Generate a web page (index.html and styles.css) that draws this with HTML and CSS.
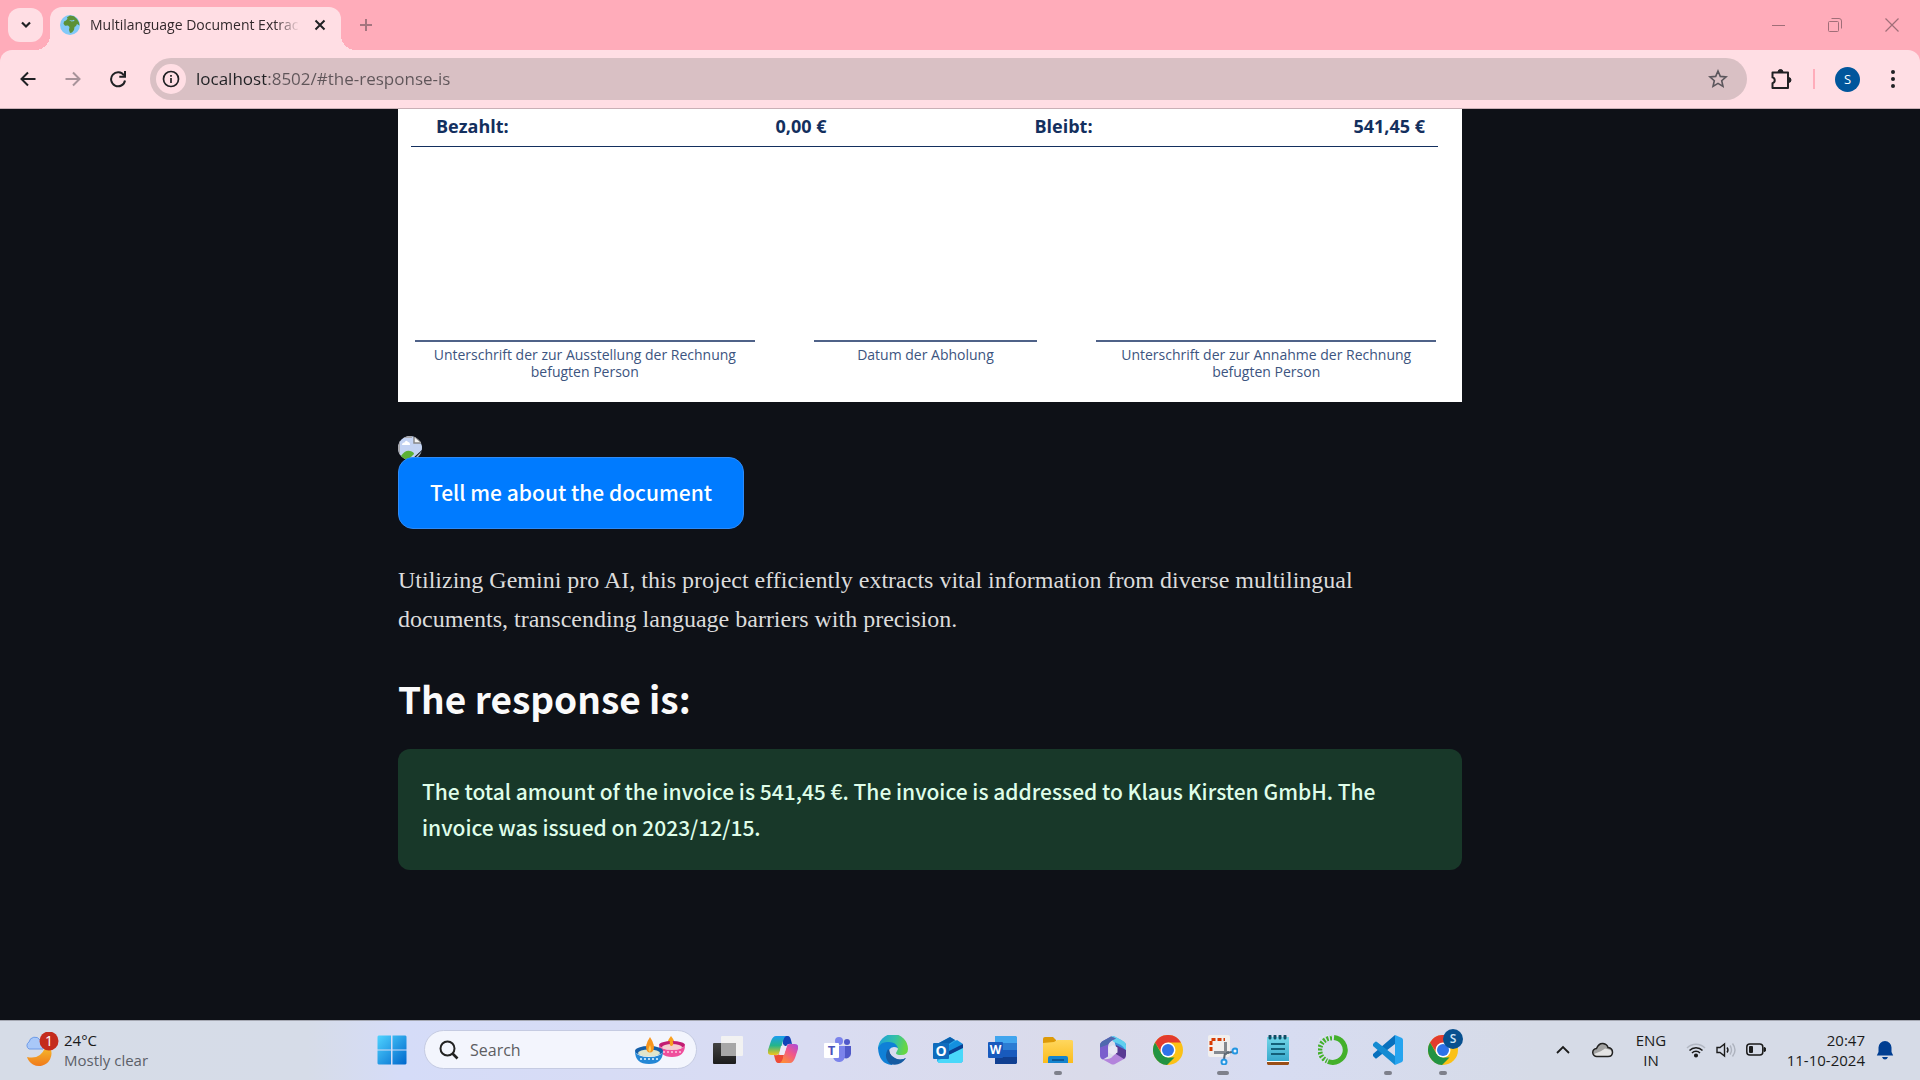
FILE: index.html
```html
<!DOCTYPE html>
<html lang="en">
<head>
<meta charset="utf-8">
<meta name="viewport" content="width=device-width, initial-scale=1">
<title>Multilanguage Document Extraction</title>
<link rel="stylesheet" href="styles.css">
</head>
<body>
<div class="desktop">

<header class="browser">
  <div class="tab-strip">
    <button class="tab-search" aria-label="Search tabs"><svg width="12" height="12" viewBox="0 0 12 12"><path d="M2 3.500l4 4 4-4" fill="none" stroke="#202124" stroke-width="2.200"/></svg></button>
    <div class="tab">
      <svg width="20" height="20" viewBox="0 0 20 20"><circle cx="10" cy="10" r="10" fill="#82c9f8"/><path d="M7 2.200l3-1.700 4 .8 3 2.700 2 3.500.5 3-2.500-1.500-1 2-1.500 1-.5 3-2 2.500-2 .5-1-3 .5-3-1.500-1.500-3 .2-1.500-2L4 6.500l2-1 1.500-1.800z" fill="#5c9137"/><path d="M9 5l3 .5 2-.8.5 1.300-3 .5z" fill="#82c9f8"/></svg>
      <span class="tab-title">Multilanguage Document Extrac</span>
      <button class="tab-close" aria-label="Close tab"><svg width="12" height="12" viewBox="0 0 12 12"><path d="M1.500 1.500l9 9M10.500 1.500l-9 9" stroke="#202124" stroke-width="2"/></svg></button>
    </div>
    <button class="new-tab" aria-label="New tab"><svg width="14" height="14" viewBox="0 0 14 14"><path d="M7 1v12M1 7h12" stroke="#a5757f" stroke-width="2"/></svg></button>
    <div class="window-controls">
      <button aria-label="Minimize"><svg width="14" height="14" viewBox="0 0 14 14"><path d="M1 7.500h13" stroke="#a06e78"/></svg></button>
      <button aria-label="Restore"><svg width="14" height="14" viewBox="0 0 14 14" fill="none" stroke="#a06e78"><rect x=".5" y="3.500" width="10" height="10" rx="1"/><path d="M3.500 .5h7.500a2.500 2.500 0 0 1 2.500 2.500v7.500"/></svg></button>
      <button aria-label="Close"><svg width="14" height="14" viewBox="0 0 14 14"><path d="M.5 .5l13 13M13.500 .5l-13 13" stroke="#a06e78" stroke-width="1.200"/></svg></button>
    </div>
  </div>

  <div class="toolbar">
    <button aria-label="Back"><svg width="18" height="18" viewBox="0 0 18 18" fill="none" stroke="#202124" stroke-width="2"><path d="M16.500 9H3M9 2.500L2.500 9 9 15.500"/></svg></button>
    <button aria-label="Forward"><svg width="18" height="18" viewBox="0 0 18 18" fill="none" stroke="#a8939a" stroke-width="2"><path d="M1.500 9H15M9 2.500L15.500 9 9 15.500"/></svg></button>
    <button aria-label="Reload"><svg width="18" height="18" viewBox="0 0 18 18" fill="none" stroke="#202124" stroke-width="2"><path d="M15 5.500A7 7 0 1 0 16 10.500"/><path d="M16 1v5.700h-5.700" /></svg></button>
    <div class="address">
      <button class="site-info" aria-label="View site information"><svg width="18" height="18" viewBox="0 0 18 18" fill="none" stroke="#202124"><circle cx="9" cy="9" r="7.500" stroke-width="1.700"/><path d="M9 8v5M9 5v1.800" stroke-width="1.700"/></svg></button>
      <input class="url" type="text" aria-label="Address and search bar" value="localhost:8502/#the-response-is">
      <button class="bookmark" aria-label="Bookmark this tab"><svg width="20" height="20" viewBox="0 0 20 20"><path d="M10 2l2.300 5.400 5.800.5-4.400 3.800 1.300 5.700-5-3-5 3 1.300-5.700L1.900 7.900l5.800-.5z" fill="none" stroke="#5b565c" stroke-width="1.600"/></svg></button>
    </div>
    <button aria-label="Extensions"><svg width="22" height="22" viewBox="0 0 22 22"><path d="M1.500 4.500h15.500v15.500H1.500v-4.800a3 3 0 0 0 0-5.800z" fill="none" stroke="#202124" stroke-width="2" stroke-linejoin="round"/><path d="M7 4a2.500 2.500 0 0 1 5 0zM17.500 9.500a2.500 2.500 0 0 1 0 5z" fill="#202124" stroke="#202124"/></svg></button>
    <span class="divider"></span>
    <button aria-label="Profile"><span class="avatar">S</span></button>
    <button aria-label="Menu"><svg width="6" height="20" viewBox="0 0 6 20" fill="#202124"><circle cx="3" cy="3" r="2"/><circle cx="3" cy="10" r="2"/><circle cx="3" cy="17" r="2"/></svg></button>
  </div>
</header>

<main class="page">
  <div class="content">
    <section class="invoice">
      <dl class="totals">
        <div><dt>Bezahlt:</dt><dd>0,00 €</dd></div>
        <div><dt>Bleibt:</dt><dd>541,45 €</dd></div>
      </dl>
      <div class="signatures">
        <p>Unterschrift der zur Ausstellung der Rechnung befugten Person</p>
        <p>Datum der Abholung</p>
        <p>Unterschrift der zur Annahme der Rechnung befugten Person</p>
      </div>
    </section>

    <svg class="missing-image" width="24" height="24" viewBox="0 0 24 24" role="img" aria-label="Image">
      <defs><clipPath id="mi"><circle cx="12" cy="12" r="12"/></clipPath></defs>
      <g clip-path="url(#mi)"><path d="M0 0h16l8 7v7L13 24H0z" fill="#c3d3f3"/><path d="M1 24V1h13" fill="none" stroke="#a9a9ad" stroke-width="2"/><path d="M4 9q0-2.500 2.500-2.500Q8 3.500 10 6q2 0 2 3z" fill="#fff"/><path d="M3 20q4-6 9-5 4 1 4 3l-6 6H2z" fill="#5cb135"/><path d="M16 0v7h8z" fill="#f5f5f5" stroke="#888" stroke-width="1.500"/><path d="M15 24l9-9v3l-6 6z" fill="#aebbc9"/></g>
    </svg>
    <button class="primary">Tell me about the document</button>
    <p class="intro">Utilizing Gemini pro AI, this project efficiently extracts vital information from diverse multilingual documents, transcending language barriers with precision.</p>
    <h2 class="response-title" id="the-response-is">The response is:</h2>
    <div class="alert" role="status">The total amount of the invoice is 541,45 €. The invoice is addressed to Klaus Kirsten GmbH. The invoice was issued on 2023/12/15.</div>
  </div>
</main>

<footer class="taskbar">
  <button class="weather">
    <svg width="36" height="36" viewBox="0 0 36 36">
      <defs><linearGradient id="moon" x2="0" y2="1"><stop stop-color="#f5b72b"/><stop offset="1" stop-color="#f07a1a"/></linearGradient></defs>
      <path d="M26 18a12.500 12.500 0 0 1-24 7q13 3 18-9z" fill="url(#moon)"/>
      <path d="M4 17a4 4 0 0 1 0-7 6 6 0 0 1 11-2 5 5 0 0 1 3 9z" fill="#a9c8f8" stroke="#6e9be8"/>
      <circle cx="24" cy="9" r="9.500" fill="#c42b1c"/><text x="24" y="14" text-anchor="middle" font-size="14" fill="#fff">1</text>
    </svg>
    <span class="weather-text"><span>24°C</span><span class="muted">Mostly clear</span></span>
  </button>

  <nav class="apps" aria-label="Taskbar">
    <button class="app" aria-label="Start"><svg width="30" height="30" viewBox="0 0 30 30"><defs><linearGradient id="win" x2="1" y2="1"><stop stop-color="#4fd3ff"/><stop offset="1" stop-color="#0067cc"/></linearGradient></defs><path d="M1.500 .5H14v14H.5V1.500zM15.500 .5h13l1 1v13h-14zM.5 15.500H14v14H1.500l-1-1zM15.500 15.500h14v13l-1 1h-13z" fill="url(#win)"/></svg></button>
    <label class="search">
      <svg width="20" height="20" viewBox="0 0 20 20" fill="none" stroke="#222"><circle cx="8.500" cy="8.500" r="7" stroke-width="2"/><path d="M13.500 13.500l5 5" stroke-width="2.600"/></svg>
      <input type="text" placeholder="Search" aria-label="Search">
      <svg width="52" height="30" viewBox="0 0 52 30">
        <path d="M37 1q5 6 3 10-3 3-6 0-2-4 3-10z" fill="#f9a01f"/><ellipse cx="38" cy="10" rx="13" ry="4" fill="#c21c72"/><ellipse cx="38" cy="12" rx="10" ry="3" fill="#f4cfd0"/><path d="M25 10q2 5 13 5t13-5q0 12-13 12T25 10z" fill="#ef4e9c"/><path d="M37 3q3 4 2 7-2 2-3 0-1-3 1-7z" fill="#f9a01f"/>
        <path d="M29 17h18" stroke="#fbc7df" stroke-width="1.500" stroke-dasharray="2 2"/>
        <ellipse cx="15" cy="16" rx="14" ry="5" fill="#145ea8"/><ellipse cx="15" cy="18" rx="11" ry="3.500" fill="#dfe5cc"/><path d="M1 16q2 6 14 6t14-6q0 13-14 13T1 16z" fill="#2487d5"/><path d="M16 2q6 9 3 14-3 3-6 0-3-5 3-14z" fill="#f7941d"/><path d="M16 10q2 5 0 7-3-1 0-7z" fill="#ffd25c"/>
        <path d="M6 24h18" stroke="#b8def8" stroke-width="2" stroke-dasharray="2 2"/>
      </svg>
    </label>
    <button class="app" aria-label="Task view"><svg width="30" height="30" viewBox="0 0 30 30"><defs><linearGradient id="tv" x2="0" y2="1"><stop stop-color="#444"/><stop offset="1" stop-color="#1c1c1c"/></linearGradient></defs><rect y="8" width="23" height="21" rx="1" fill="url(#tv)"/><rect x="8" y="1" width="22" height="20" rx="1" fill="#f2f2f2"/><path d="M8 8h15v13H8z" fill="#a7a7a7"/></svg></button>
    <button class="app" aria-label="Copilot"><svg width="30" height="30" viewBox="0 0 30 30"><defs><linearGradient id="cpa" x2="0" y2="1"><stop stop-color="#1c9cf0"/><stop offset=".5" stop-color="#24b58a"/><stop offset="1" stop-color="#f3c51a"/></linearGradient><linearGradient id="cpb" x1="1" x2=".3" y2="1"><stop stop-color="#a64be0"/><stop offset=".5" stop-color="#f0568b"/><stop offset="1" stop-color="#fd8a3c"/></linearGradient></defs><path d="M15 1h5q2 0 3 4l1 4q-5-1-6 3l-3-3z" fill="#1244b8"/><path d="M8 1h10q-2 1-3 5l-3 10q-1 4-4 4H3q-4 0-3-5l3-9q2-5 5-5z" fill="url(#cpa)"/><path d="M15 28h-5q-2 0-3-4l-1-4q6 1 7-4l3 3z" fill="#ee4b36"/><path d="M22 28H12q2-1 3-5l3-10q1-4 4-4h5q4 0 3 5l-3 9q-2 5-5 5z" fill="url(#cpb)"/><path d="M13 11h6l-3 9h-5z" fill="#edeaf8"/></svg></button>
    <button class="app" aria-label="Teams"><svg width="30" height="30" viewBox="0 0 30 30"><circle cx="16" cy="6" r="4" fill="#7b83eb"/><circle cx="24" cy="7" r="3" fill="#5059c9"/><path d="M19 11h9v8a5 5 0 0 1-7 4z" fill="#5059c9"/><path d="M10 11h12v9a6 6 0 0 1-12 2z" fill="#7b83eb"/><rect x="1" y="8" width="15" height="15" rx="1" fill="#fff"/><text x="8.500" y="20" text-anchor="middle" font-size="13" font-weight="700" fill="#4b53bc">T</text></svg></button>
    <button class="app" aria-label="Edge"><svg width="30" height="30" viewBox="0 0 30 30"><defs><linearGradient id="eg" x2="1" y2=".2"><stop stop-color="#1b9de2"/><stop offset=".6" stop-color="#35c1a5"/><stop offset="1" stop-color="#66d644"/></linearGradient></defs><path d="M0 14A15 15 0 0 1 30 14q0 6-7 6-5 0-5-2l2-4q-2-5-9-5-7 0-11 5z" fill="url(#eg)"/><path d="M0 13Q3 6 11 7q7 0 9 6-6-3-9 2-2 6 4 11l-1 4Q1 29 0 13z" fill="#0f80d7"/><path d="M11 14q-5 7 1 12 7 6 16-3-5 3-10 1-6-2-7-10z" fill="#114b8b"/><path d="M10 14q-5 8 2 15 10 3 16-6-6 3-11 0-6-3-7-9z" fill="#155ba2"/></svg></button>
    <button class="app" aria-label="Outlook"><svg width="30" height="30" viewBox="0 0 30 30"><path d="M4 9l13-7 13 8v16l-2 2H6l-2-2z" fill="#2ba7e9"/><path d="M4 9l13-7 5 3L8 14z" fill="#0a5fae"/><path d="M10 14L24 5l6 4-14 9z" fill="#1490df"/><path d="M16 16l14-7v5L16 20z" fill="#0a3f91"/><path d="M4 26l26-13v13l-2 2H6z" fill="#49d8fa"/><rect y="8" width="16" height="16" rx="1" fill="#0f6cbd"/><text x="8" y="21" text-anchor="middle" font-size="14" font-weight="700" fill="#fff">O</text></svg></button>
    <button class="app" aria-label="Word"><svg width="30" height="30" viewBox="0 0 30 30"><path d="M7 1h21l1 1v6H7z" fill="#41a5ee"/><path d="M7 8h22v7H7z" fill="#2b7cd3"/><path d="M7 15h22v7H7z" fill="#185abd"/><path d="M7 22h22v6l-1 1H7z" fill="#103f91"/><rect y="7" width="15" height="16" rx="1" fill="#185abd"/><text x="7.500" y="19" text-anchor="middle" font-size="12" font-weight="700" fill="#fff">W</text></svg></button>
    <button class="app running" aria-label="File Explorer"><svg width="30" height="30" viewBox="0 0 30 30"><defs><linearGradient id="fx" x2="0" y2="1"><stop stop-color="#ffd75e"/><stop offset="1" stop-color="#fbbc1c"/></linearGradient></defs><path d="M0 4q0-2 2-2h8l3 3v5H0z" fill="#dd9a08"/><path d="M0 8l11-1 3-2h15l1 1v22H0z" fill="url(#fx)"/><path d="M5 28v-5q0-2 2-2h16q2 0 2 2v5z" fill="#1484cf"/><path d="M9 25h12" stroke="#0a4b83" stroke-width="1.500"/></svg></button>
    <button class="app" aria-label="Microsoft 365"><svg width="30" height="30" viewBox="0 0 30 30"><path d="M15 1l8 4 5 4v12l-9-5z" fill="#3a8fdd"/><path d="M13 1.500q2-1 4 0l9 5q2 1 2 4v6q-2-5-6-7l-7-3z" fill="#5fd0ee"/><path d="M13 1.500l5 2q-8 3-8 8v10l-5 3q-3-1-3-4V10q0-2 2-3.500z" fill="#7a5fcd"/><path d="M13 1.500l5 2q-6 2-8 6l-8 3V10q0-2 2-3.500z" fill="#4f69ae"/><path d="M28 16v4q0 3-2 4l-9 5q-2 1-4 0l-9-5q8 1 11-3l6-5z" fill="#b384dc"/><path d="M18 10l10 5v5q0 2-2 4l-8-5z" fill="#583a92"/><path d="M15 10l4.500 2.500v5L15 20l-4.500-2.500v-5z" fill="#e8e6f4"/></svg></button>
    <button class="app" aria-label="Chrome"><svg width="30" height="30" viewBox="0 0 30 30"><circle cx="15" cy="15" r="15" fill="#fbc116"/><path d="M2 7.500A15 15 0 0 1 28 7.500H15L9 18.500z" fill="#e33b2e"/><path d="M2 7.500L8.500 18.800 15 22.500h6.500L14 30A15 15 0 0 1 2 7.500z" fill="#229342"/><circle cx="15" cy="15" r="7.500" fill="#fff"/><circle cx="15" cy="15" r="6" fill="#2f72e8"/></svg></button>
    <button class="app active" aria-label="Snipping Tool"><svg width="30" height="30" viewBox="0 0 30 30"><rect width="22" height="22" rx="2" fill="#f1efee"/><path d="M3 16V4.500h14" fill="none" stroke="#d83b01" stroke-width="3" stroke-dasharray="4 2"/><path d="M17.500 7v13M6 17.500h15" stroke="#858a90" stroke-width="3"/><path d="M18 18l6-1M17 18l-1 6" stroke="#5c6873" stroke-width="2"/><circle cx="27" cy="16" r="2.500" fill="#e8f3fc" stroke="#2496e2" stroke-width="2"/><circle cx="16" cy="27" r="2.500" fill="#e8f3fc" stroke="#2496e2" stroke-width="2"/></svg></button>
    <button class="app" aria-label="Notepad"><svg width="30" height="30" viewBox="0 0 30 30"><defs><linearGradient id="np" x2="0" y2="1"><stop stop-color="#72d6e8"/><stop offset="1" stop-color="#38a9cc"/></linearGradient></defs><path d="M4 26h22v3l-1 1H5l-1-1z" fill="#9a4f17"/><path d="M4 26h22v1H4z" fill="#fff"/><path d="M4 2h22v24H4z" fill="url(#np)"/><path d="M7 1v2M12 1v2M17 1v2M22 1v2" stroke="#114e66" stroke-width="3" stroke-linecap="round"/><path d="M8 9h14M8 14h14M8 19h14" stroke="#146079" stroke-width="2"/></svg></button>
    <button class="app" aria-label="Anaconda"><svg width="30" height="30" viewBox="0 0 30 30" fill="none" stroke="#43b02a"><path d="M16 2.500a12.500 12.500 0 1 1-6 24" stroke-width="5"/><path d="M14 3A12 12 0 0 0 9 26" stroke-width="5" stroke-dasharray="2 1.500"/><path d="M14 1A13 13 0 0 0 7 27" stroke="#e4eef0" stroke-width="1" stroke-dasharray="2 2"/></svg></button>
    <button class="app running" aria-label="Visual Studio Code"><svg width="30" height="30" viewBox="0 0 30 30"><path d="M22 0l7 3q1 1 1 2v20q0 1-1 2l-7 3z" fill="#26a4ef"/><path d="M22 0v9L4 23q-1 1-2 0l-2-2q-1-1 0-2z" fill="#0870bd"/><path d="M22 30v-9L4 7Q3 6 2 7L0 9q-1 1 0 2z" fill="#148bd2"/></svg></button>
    <button class="app running" aria-label="Chrome, profile S"><svg width="30" height="30" viewBox="0 0 30 30"><circle cx="15" cy="15" r="15" fill="#fbc116"/><path d="M2 7.500A15 15 0 0 1 28 7.500H15L9 18.500z" fill="#e33b2e"/><path d="M2 7.500L8.500 18.800 15 22.500h6.500L14 30A15 15 0 0 1 2 7.500z" fill="#229342"/><circle cx="15" cy="15" r="7.500" fill="#fff"/><circle cx="15" cy="15" r="6" fill="#2f72e8"/></svg><span class="badge">S</span></button>
  </nav>

  <div class="tray">
    <button class="tray-button" aria-label="Show hidden icons"><svg width="14" height="10" viewBox="0 0 14 10"><path d="M1 8l6-6 6 6" fill="none" stroke="#1b1b1b" stroke-width="1.800"/></svg></button>
    <button class="tray-button" aria-label="OneDrive"><svg width="22" height="16" viewBox="0 0 22 16"><path d="M5 14.500a4 4 0 0 1-.5-8Q7 1 11 1.500q4 .5 5 4 4.500.5 4.500 4.700 0 4.300-4.500 4.300z" fill="#a2a2a2"/><path d="M2 12q8-3 11-5.500 7 1 7 4 0 4-4 4H5q-2 0-3-2.500z" fill="#e4e4e4"/><path d="M5 14.500a4 4 0 0 1-.5-8Q7 1 11 1.500q4 .5 5 4 4.500.5 4.500 4.700 0 4.300-4.500 4.300z" fill="none" stroke="#222" stroke-width="1.500"/></svg></button>
    <button class="language"><span>ENG</span><span>IN</span></button>
    <button class="status" aria-label="Network, volume and battery">
      <svg width="20" height="16" viewBox="0 0 20 16" fill="none" stroke="#1b1b1b" stroke-width="1.500"><path d="M1 6a12.500 12.500 0 0 1 18 0" stroke="#b3b8c3"/><path d="M3.500 8.500a9 9 0 0 1 13 0M6 11a5.500 5.500 0 0 1 8 0"/><circle cx="10" cy="13.500" r="1.300" fill="#1b1b1b"/></svg>
      <svg width="20" height="16" viewBox="0 0 20 16" fill="none" stroke="#1b1b1b" stroke-width="1.400"><path d="M1 5.500h3L8.500 2v12L4 10.500H1z"/><path d="M11 5.500q2 2.500 0 5"/><path d="M14 3.500q3 4.500 0 9M16.500 1.500q5 6.500 0 13" stroke="#aeb3be"/></svg>
      <svg width="20" height="14" viewBox="0 0 20 14"><rect x=".8" y="1" width="16" height="11" rx="3" fill="none" stroke="#1b1b1b" stroke-width="1.500"/><rect x="3" y="3" width="4" height="7" rx="1" fill="#1b1b1b"/><path d="M18 4.500q2 0 2 2t-2 2z" fill="#1b1b1b" stroke="#1b1b1b"/></svg>
    </button>
    <button class="clock"><span>20:47</span><span>11-10-2024</span></button>
    <button class="bell" aria-label="Notifications"><svg width="18" height="20" viewBox="0 0 18 20" fill="#003e92"><path d="M9 1a6.500 6.500 0 0 1 6.500 6.500V12l1.700 3.500H.8L2.500 12V7.500A6.500 6.500 0 0 1 9 1zM6 17h6q-1 2.500-3 2.500T6 17z"/></svg></button>
  </div>
</footer>

</div>
</body>
</html>
```
FILE: styles.css
```css
* { box-sizing: border-box; }

body {
  margin: 0;
  background: #0e1117;
  font-family: "Open Sans", "Noto Sans", sans-serif;
}

h2, p, dl, dd { margin: 0; }

button, input {
  margin: 0;
  padding: 0;
  border: 0;
  background: none;
  color: inherit;
  font: inherit;
}

button {
  display: flex;
  align-items: center;
  justify-content: center;
}

input { min-width: 0; outline: 0; }
svg { display: block; flex: none; }

.desktop {
  display: flex;
  flex-direction: column;
  min-height: 100vh;
}

/* Browser frame */
.browser { background: #ffacba; }

.tab-strip {
  display: flex;
  align-items: center;
  height: 50px;
  padding-left: 8px;
}

.tab-search {
  width: 35px;
  height: 34px;
  border-radius: 12px;
  background: #ffdee4;
}

.tab {
  position: relative;
  display: flex;
  align-items: center;
  align-self: flex-end;
  width: 291px;
  height: 43px;
  margin-left: 7px;
  padding: 0 9px 7px 10px;
  border-radius: 12px 12px 0 0;
  background: #ffdee4;
}

.tab::before,
.tab::after {
  content: "";
  position: absolute;
  bottom: 0;
  width: 15px;
  height: 15px;
}

.tab::before {
  right: 100%;
  background: radial-gradient(circle at 0 0, transparent 15px, #ffdee4 15px);
}

.tab::after {
  left: 100%;
  background: radial-gradient(circle at 100% 0, transparent 15px, #ffdee4 15px);
}

.tab-title {
  flex: 1;
  margin-left: 10px;
  color: #33292c;
  font-size: 14px;
  line-height: 20px;
  white-space: nowrap;
  -webkit-mask-image: linear-gradient(90deg, #000 88%, transparent);
  mask-image: linear-gradient(90deg, #000 88%, transparent);
}

.tab-close { width: 24px; height: 24px; margin-left: 8px; }
.new-tab { width: 34px; height: 34px; margin-left: 8px; }

.window-controls { display: flex; margin-left: auto; }
.window-controls button { width: 57px; height: 50px; }

.toolbar {
  display: flex;
  align-items: center;
  height: 59px;
  padding: 0 5px;
  border-bottom: 1px solid #c9b0b6;
  border-radius: 12px 12px 0 0;
  background: #ffdee4;
}

.toolbar > button { width: 45px; height: 42px; }

.address {
  display: flex;
  flex: 1;
  align-items: center;
  height: 42px;
  margin: 0 12px 0 10px;
  padding: 0 6px;
  border-radius: 21px;
  background: #d9c0c4;
}

.site-info {
  width: 30px;
  height: 30px;
  border-radius: 50%;
  background: #ffdee4;
}

.url {
  flex: 1;
  margin-left: 10px;
  background: linear-gradient(90deg, #202124 70px, #5f5559 70px);
  -webkit-background-clip: text;
  background-clip: text;
  color: transparent;
  font-size: 17px;
  line-height: 24px;
}

.bookmark { width: 46px; height: 34px; }

.divider {
  width: 2px;
  height: 20px;
  margin: 0 10px 0 9px;
  background: #ffacba;
}

.avatar {
  width: 25px;
  border-radius: 50%;
  background: #00569c;
  color: #fff;
  font-size: 13px;
  line-height: 25px;
}

/* Web page */
.page {
  flex: 1;
  padding-right: 60px;
  background: #0e1117;
}

.content {
  max-width: 1064px;
  margin: 0 auto;
  padding-bottom: 48px;
}

.invoice {
  margin-bottom: 34px;
  padding: 0 24px 22px 13px;
  background: #fff;
  color: #132f5e;
}

.totals {
  display: grid;
  grid-template-columns: 1fr 1fr;
  column-gap: 208px;
  padding: 3px 13px 6px 25px;
  border-bottom: 1px solid #132f5e;
  font-size: 18px;
  font-weight: 700;
  line-height: 28px;
}

.totals div { display: flex; justify-content: space-between; }

.signatures {
  display: grid;
  grid-template-columns: 340fr 224fr 340fr;
  column-gap: 59px;
  padding: 193px 2px 0 4px;
}

.signatures p {
  padding: 4px 16px 0;
  border-top: 2px solid #4f6288;
  color: #3c5480;
  font-size: 14px;
  line-height: 17px;
  text-align: center;
}

.missing-image { margin-bottom: -3px; }

.primary {
  position: relative;
  height: 72px;
  padding: 0 31px 2px;
  border: 1px solid #2e8bf7;
  border-radius: 15px;
  background: #007bff;
  color: #fff;
  font-family: "Noto Sans CJK SC", sans-serif;
  font-size: 21px;
  font-weight: 500;
}

.intro {
  margin-top: 32px;
  color: #dcdcdc;
  font-family: "Liberation Serif", serif;
  font-size: 24px;
  line-height: 39px;
}

.response-title {
  margin-top: 34px;
  color: #fafafa;
  font-family: "Noto Sans CJK SC", sans-serif;
  font-size: 37px;
  font-weight: 700;
  line-height: 50px;
}

.alert {
  margin-top: 26px;
  padding: 24px 24px 25px;
  border-radius: 12px;
  background: #183829;
  color: #dffde9;
  font-family: "Noto Sans CJK SC", sans-serif;
  font-size: 21px;
  font-weight: 500;
  line-height: 36px;
}

/* Taskbar */
.taskbar {
  display: grid;
  grid-template-columns: 1fr auto 1fr;
  align-items: center;
  height: 60px;
  padding-bottom: 2px;
  border-top: 1px solid #a5a8b2;
  background: linear-gradient(90deg, #d6dce7 0, #d6dce8 16%, #d5dcf8 21%, #d9dcf2 42%, #dadbea 57%, #d7dcf2 66%, #d6dbe7 80%);
  color: #1b1b1b;
}

.weather {
  justify-self: start;
  gap: 3px;
  padding-left: 25px;
}

.weather-text {
  display: flex;
  flex-direction: column;
  align-items: flex-start;
  font-size: 15px;
  line-height: 20px;
}

.muted { color: #5c6068; }

.apps { display: flex; align-items: center; padding-right: 73px; }

.app {
  position: relative;
  width: 55px;
  height: 56px;
}

.running::after,
.active::after {
  content: "";
  position: absolute;
  bottom: 3px;
  width: 8px;
  height: 4px;
  border-radius: 2px;
  background: #7e808b;
}

.active::after { width: 12px; }

.badge {
  position: absolute;
  top: 7px;
  right: 7px;
  width: 20px;
  border-radius: 50%;
  background: #07508f;
  color: #cfe3f5;
  font-size: 12px;
  font-weight: 600;
  line-height: 20px;
}

.search {
  display: flex;
  align-items: center;
  width: 273px;
  height: 39px;
  margin: 0 3px 0 5px;
  padding: 0 10px 0 14px;
  border: 1px solid #c5cbe2;
  border-radius: 20px;
  background: #f3f5fd;
}

.search input { flex: 1; margin-left: 11px; font-size: 16px; }
.search input::placeholder { color: #5d5d62; opacity: 1; }

.tray {
  display: flex;
  align-items: center;
  justify-self: end;
  padding-right: 26px;
  font-size: 15px;
  line-height: 20px;
}

.tray-button { width: 40px; height: 40px; }

.language { flex-direction: column; width: 56px; }
.status { gap: 10px; width: 94px; }
.clock { flex-direction: column; align-items: flex-end; width: 92px; }
.bell { margin-left: 11px; }
```
